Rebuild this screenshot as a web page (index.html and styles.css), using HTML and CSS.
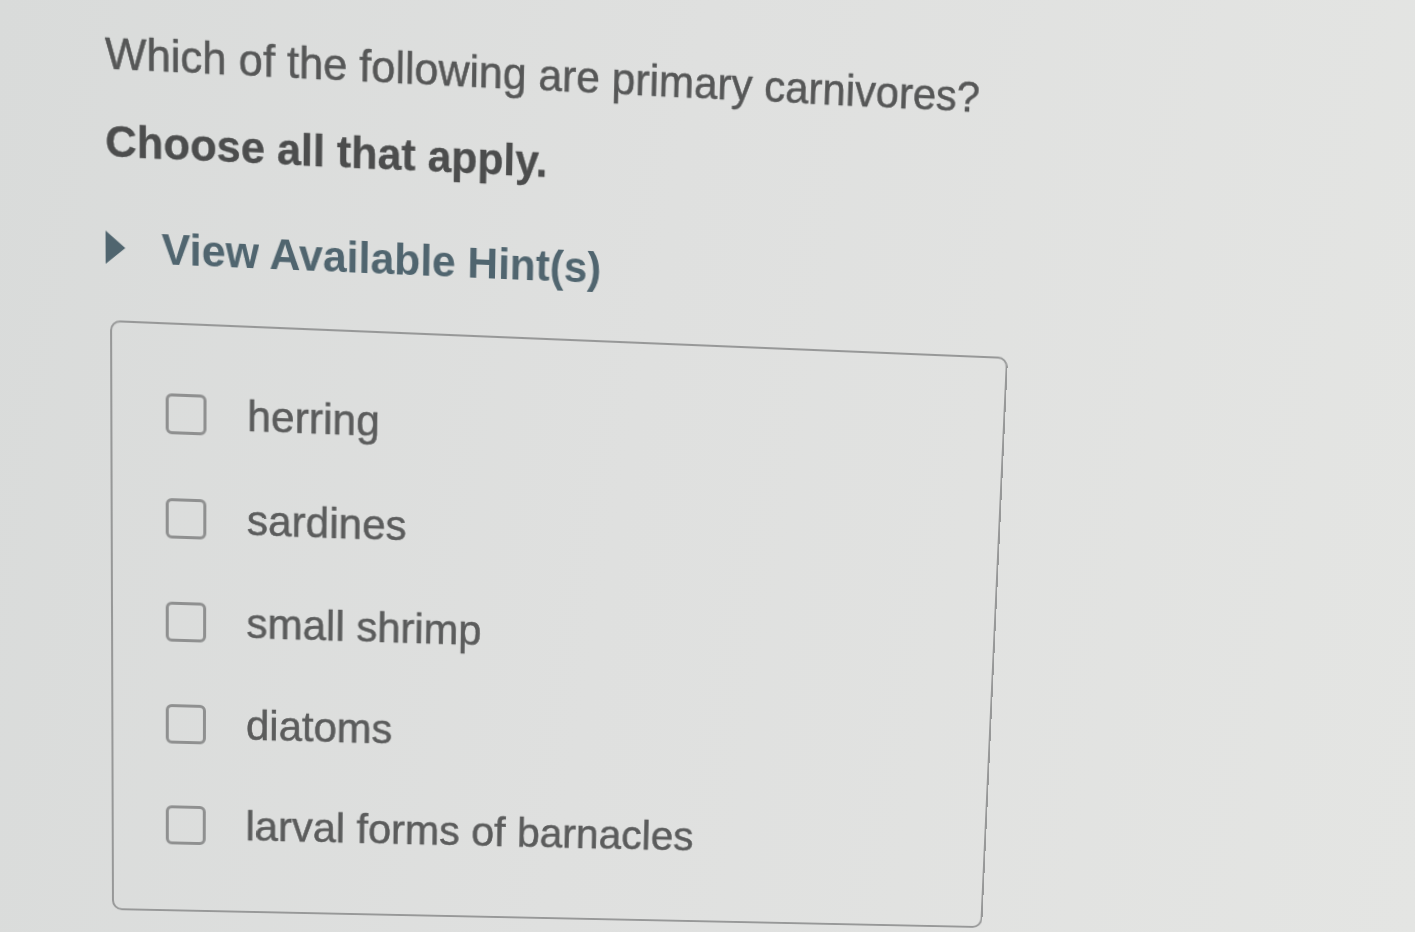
FILE: index.html
```html
<!DOCTYPE html>
<html>
  <head>
    <meta name="viewport" content="width=device-width, initial-scale=1.0">
    <title>Question</title>
    <link rel="stylesheet" href="styles.css">
  </head>
  <body>
    <div class="sheet">
      <p class="prompt">Which of the following are primary carnivores?</p>
      <p class="prompt prompt-sub">Choose all that apply.</p>
      <div class="hints">
        <span class="hints-arrow"></span>
        <span class="hints-label">View Available Hint(s)</span>
      </div>
      <ul class="choices">
        <li><label class="choice"><input class="check" type="checkbox"><span>herring</span></label></li>
        <li><label class="choice"><input class="check" type="checkbox"><span>sardines</span></label></li>
        <li><label class="choice"><input class="check" type="checkbox"><span>small shrimp</span></label></li>
        <li><label class="choice"><input class="check" type="checkbox"><span>diatoms</span></label></li>
        <li><label class="choice"><input class="check" type="checkbox"><span>larval forms of barnacles</span></label></li>
      </ul>
    </div>
  </body>
</html>
```

FILE: styles.css
```css
html, body {
  margin: 0;
  height: 100%;
}
body {
  background: linear-gradient(100deg, #d9dbda 0%, #dfe0df 45%, #e4e5e3 100%);
  font-family: "Liberation Sans", Arial, sans-serif;
  overflow: hidden;
}
/* the whole page is seen a little tilted, like a monitor photographed at an angle */
.sheet {
  width: 1415px;
  height: 932px;
  box-sizing: border-box;
  padding: 42px 0 0 106px;
  transform-origin: 110px 320px;
  transform: matrix3d(1.03223, 0.042528, 0, 0.000035891, 0.003502, 1.03315, 0, 0.000056181, 0, 0, 1, 0, 0, 0, 0, 1);
}
.prompt {
  margin: 0;
  font-size: 42px;
  line-height: 48px;
  color: #565757;
  -webkit-text-stroke: 0.5px #565757;
}
.prompt-sub {
  margin-top: 35px;
  font-weight: bold;
  color: #4c4d4d;
  -webkit-text-stroke: 0.3px #4c4d4d;
}
.hints {
  display: flex;
  align-items: center;
  height: 48px;
  margin-top: 53px;
  font-size: 42px;
  line-height: 48px;
  font-weight: bold;
  color: #50656f;
}
.hints-arrow {
  width: 0;
  height: 0;
  border-top: 16px solid transparent;
  border-bottom: 16px solid transparent;
  border-left: 19px solid #50656f;
  margin-right: 35px;
}
.choices {
  list-style: none;
  display: flex;
  flex-direction: column;
  gap: 55px;
  width: 898px;
  box-sizing: border-box;
  margin: 46px 0 0 4px;
  padding: 63px 0 63px 52px;
  border: 2px solid #979898;
  border-radius: 10px;
}
.choice {
  display: flex;
  align-items: center;
  gap: 40px;
  height: 48px;
  font-size: 42px;
  line-height: 48px;
  color: #5b5c5c;
  -webkit-text-stroke: 0.5px #5b5c5c;
}
.check {
  appearance: none;
  -webkit-appearance: none;
  flex: none;
  margin: 0;
  width: 40px;
  height: 40px;
  box-sizing: border-box;
  border: 3px solid #8f9090;
  border-radius: 6px;
  background: transparent;
}
```
